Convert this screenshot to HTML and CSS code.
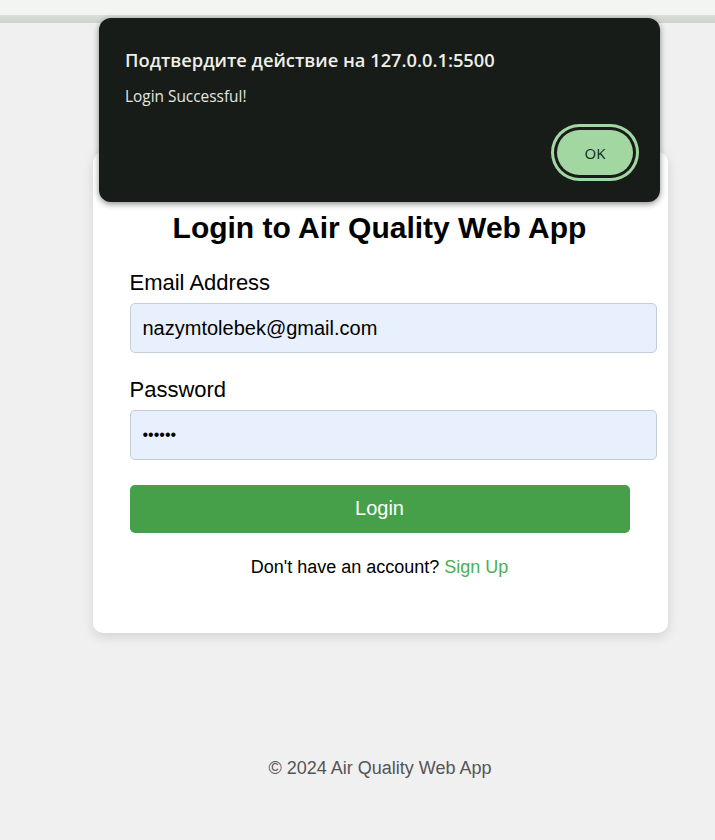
FILE: index.html
```html
<!DOCTYPE html>
<html lang="en">
<head>
<meta charset="utf-8">
<title>Login - Air Quality Web App</title>
<link rel="stylesheet" href="styles.css">
</head>
<body>
<div class="topbar"><div class="topbar-line"></div></div>
<div class="page">
  <div class="card">
    <h2 class="title">Login to Air Quality Web App</h2>
    <form class="form">
      <div class="group">
        <label class="label">Email Address</label>
        <input class="input" type="email" value="nazymtolebek@gmail.com">
      </div>
      <div class="group">
        <label class="label">Password</label>
        <input class="input input-pass" type="password" value="123456">
      </div>
      <button class="btn" type="button">Login</button>
    </form>
    <p class="signup">Don't have an account? <a class="link" href="#">Sign Up</a></p>
  </div>
  <footer class="footer">© 2024 Air Quality Web App</footer>
</div>
<div class="dialog">
  <div class="dialog-title">Подтвердите действие на 127.0.0.1:5500</div>
  <div class="dialog-msg">Login Successful!</div>
  <div class="dialog-actions"><button class="ok" type="button">OK</button></div>
</div>
</body>
</html>
```
FILE: styles.css
```css
html, body {
  margin: 0;
  padding: 0;
}
body {
  background: #f0f0f0;
  font-family: "Liberation Sans", Arial, sans-serif;
  color: #000;
  overflow: hidden;
  height: 840px;
}
.topbar {
  height: 15px;
  background: #f3f5f2;
  margin-bottom: 8px;
}
.topbar-line {
  position: relative;
  top: 15px;
  height: 8px;
  background: linear-gradient(#dadfd8, #cfd3cd);
}
.page {
  box-sizing: border-box;
  width: 100%;
  padding-left: 45px;
  display: flex;
  flex-direction: column;
  align-items: center;
}
.card {
  margin-top: 129px;
  width: 500px;
  background: #fff;
  border-radius: 10px;
  padding: 37px 38px 37px 37px;
  box-shadow: 0 4px 12px rgba(0, 0, 0, 0.12);
}
.title {
  margin: 23px 0 27px;
  font-size: 30px;
  line-height: 32px;
  font-weight: bold;
  text-align: center;
}
.form {
  display: flex;
  flex-direction: column;
}
.group {
  display: flex;
  flex-direction: column;
  margin-bottom: 25px;
}
.label {
  font-size: 22px;
  line-height: 23px;
  margin: 0 0 9px 0;
}
.input {
  width: 500px;
  height: 24px;
  padding: 12px 13px 12px 12px;
  border: 1px solid #c6ccd6;
  border-radius: 5px;
  background: #e8f0fe;
  font-family: "Liberation Sans", Arial, sans-serif;
  font-size: 20px;
  color: #000;
  outline: none;
}
.input-pass {
  font-size: 16px;
}
.btn {
  width: 500px;
  height: 48px;
  border: none;
  border-radius: 5px;
  background: #46a049;
  color: #fff;
  font-family: "Liberation Sans", Arial, sans-serif;
  font-size: 20px;
  padding: 0 0 2px 0;
}
.signup {
  margin: 24px 0 18px;
  text-align: center;
  font-size: 18px;
  line-height: 21px;
}
.link {
  color: #4caf50;
  text-decoration: none;
}
.footer {
  margin-top: 125px;
  font-size: 18px;
  line-height: 21px;
  color: #555;
  text-align: center;
}
.dialog {
  position: absolute;
  left: 99px;
  top: 18px;
  width: 561px;
  height: 184px;
  box-sizing: border-box;
  background: #181c18;
  border-radius: 12px;
  box-shadow: 0 2px 6px rgba(0, 0, 0, 0.45);
  padding: 30px 21px 21px 26px;
  font-family: "Open Sans", "Noto Sans", sans-serif;
  color: #eeefe8;
  display: flex;
  flex-direction: column;
}
.dialog-title {
  font-size: 18.3px;
  line-height: 24px;
  font-weight: 600;
}
.dialog-msg {
  margin-top: 15px;
  font-size: 15.4px;
  line-height: 20px;
  color: #e3e6e1;
}
.dialog-actions {
  margin-top: auto;
  display: flex;
  justify-content: flex-end;
  padding: 6px;
}
.ok {
  width: 76px;
  height: 45px;
  border: none;
  border-radius: 999px;
  background: #a2d7a2;
  box-shadow: 0 0 0 3px #181c18, 0 0 0 6px #a2d7a2;
  color: #0c2e14;
  font-family: "Open Sans", "Noto Sans", sans-serif;
  font-size: 15px;
  font-weight: 500;
  padding: 0;
}
```
